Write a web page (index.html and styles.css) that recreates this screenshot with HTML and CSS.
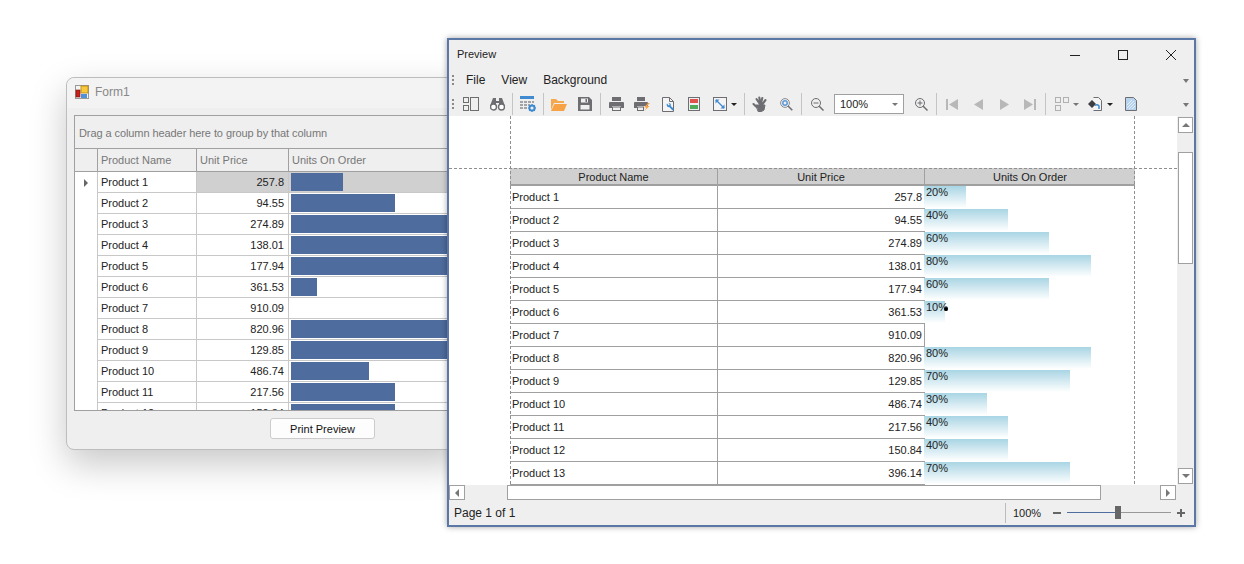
FILE: index.html
```html
<!DOCTYPE html>
<html lang="en">
<head>
<meta charset="utf-8">
<title>Preview</title>
<link rel="stylesheet" href="styles.css">
</head>
<body>
<section class="form">
  <header class="form-title">
    <svg class="form-icon" width="14" height="14" viewBox="0 0 14 14"><rect x=".5" y=".5" width="13" height="13" fill="#f4f4f4" stroke="#999"/><rect x="6" y="1" width="7" height="7" fill="#f8c93a" stroke="#b8860b" stroke-width=".8"/><rect x="1" y="5" width="4" height="7" fill="#c8201a" stroke="#7a100c" stroke-width=".6"/><rect x="6" y="9" width="6" height="4" fill="#4f8fdc"/></svg>
    <span>Form1</span>
  </header>
  <div class="grid">
    <div class="group-panel">Drag a column header here to group by that column</div>
    <div class="grid-head"><div></div><div>Product Name</div><div>Unit Price</div><div>Units On Order</div></div>
    <div class="grid-body">
      <div class="grid-row sel"><div class="ind"><i class="tri"></i></div><div class="name">Product 1</div><div class="price">257.8</div><div class="units"><b style="width:52px"></b></div></div>
      <div class="grid-row"><div class="ind"></div><div class="name">Product 2</div><div class="price">94.55</div><div class="units"><b style="width:104px"></b></div></div>
      <div class="grid-row"><div class="ind"></div><div class="name">Product 3</div><div class="price">274.89</div><div class="units"><b style="width:156px"></b></div></div>
      <div class="grid-row"><div class="ind"></div><div class="name">Product 4</div><div class="price">138.01</div><div class="units"><b style="width:208px"></b></div></div>
      <div class="grid-row"><div class="ind"></div><div class="name">Product 5</div><div class="price">177.94</div><div class="units"><b style="width:156px"></b></div></div>
      <div class="grid-row"><div class="ind"></div><div class="name">Product 6</div><div class="price">361.53</div><div class="units"><b style="width:26px"></b></div></div>
      <div class="grid-row"><div class="ind"></div><div class="name">Product 7</div><div class="price">910.09</div><div class="units"></div></div>
      <div class="grid-row"><div class="ind"></div><div class="name">Product 8</div><div class="price">820.96</div><div class="units"><b style="width:208px"></b></div></div>
      <div class="grid-row"><div class="ind"></div><div class="name">Product 9</div><div class="price">129.85</div><div class="units"><b style="width:182px"></b></div></div>
      <div class="grid-row"><div class="ind"></div><div class="name">Product 10</div><div class="price">486.74</div><div class="units"><b style="width:78px"></b></div></div>
      <div class="grid-row"><div class="ind"></div><div class="name">Product 11</div><div class="price">217.56</div><div class="units"><b style="width:104px"></b></div></div>
      <div class="grid-row"><div class="ind"></div><div class="name">Product 12</div><div class="price">150.84</div><div class="units"><b style="width:104px"></b></div></div>
    </div>
  </div>
  <div class="form-foot"><button class="print-btn" type="button">Print Preview</button></div>
</section>

<section class="preview">
  <header class="pv-title">
    <span>Preview</span>
    <div class="win-btns">
      <span class="win-btn"><svg width="12" height="12" viewBox="0 0 12 12"><path d="M1 6.500h10" stroke="#222" fill="none"/></svg></span>
      <span class="win-btn"><svg width="12" height="12" viewBox="0 0 12 12"><rect x="1.500" y="1.500" width="9" height="9" stroke="#222" fill="none"/></svg></span>
      <span class="win-btn"><svg width="12" height="12" viewBox="0 0 12 12"><path d="M1 1l10 10M11 1L1 11" stroke="#222" fill="none"/></svg></span>
    </div>
  </header>
  <nav class="menubar">
    <i class="grip"></i>
    <span class="menu-item">File</span><span class="menu-item">View</span><span class="menu-item">Background</span>
    <i class="overflow"></i>
  </nav>
  <div class="toolbar">
    <i class="grip"></i>
    <span class="tb"><svg width="16" height="14" viewBox="0 0 16 14" fill="none" stroke="#6d6d72"><rect x=".5" y=".5" width="5" height="5"/><rect x=".5" y="8.500" width="5" height="5"/><rect x="7.500" y=".5" width="8" height="13"/></svg></span>
    <span class="tb"><svg width="15" height="13" viewBox="0 0 15 13"><path d="M3 0h3v3h3V0h3l3 8H9V5H6v3H0z" fill="#6d6d72"/><circle cx="3.500" cy="9" r="3" fill="#fff" stroke="#6d6d72" stroke-width="1.400"/><circle cx="11.500" cy="9" r="3" fill="#fff" stroke="#6d6d72" stroke-width="1.400"/></svg></span>
    <i class="sep"></i>
    <span class="tb"><svg width="16" height="16" viewBox="0 0 16 16"><rect width="14" height="3" fill="#3f8ad0"/><path d="M0 5h3v2H0zM4 5h3v2H4zM8 5h3v2H8zM12 5h2v2h-2zM0 8h3v2H0zM4 8h3v2H4zM8 8h2v2H8zM0 11h3v2H0zM4 11h3v2H4z" fill="#a3a3a6"/><circle cx="12" cy="12" r="2.600" fill="none" stroke="#3f8ad0" stroke-width="2"/><path d="M12 8v1.500M12 14.500V16M8 12h1.500M14.500 12H16M9.200 9.200l1 1M13.800 13.800l1 1M14.800 9.200l-1 1M10.200 13.800l-1 1" stroke="#3f8ad0" stroke-width="1.200"/></svg></span>
    <i class="sep"></i>
    <span class="tb"><svg width="16" height="13" viewBox="0 0 16 13"><path d="M0 1h5l2 2h6v2H3L0 12z" fill="#f5a94e"/><path d="M3.500 6H16l-3 7H0z" fill="#f7a345"/></svg></span>
    <span class="tb"><svg width="14" height="14" viewBox="0 0 14 14"><path d="M0 0h11l3 3v11H0z" fill="#6d6d72"/><rect x="3" y="1.500" width="7" height="4" fill="#efefef"/><rect x="7.500" y="2" width="1.500" height="3" fill="#6d6d72"/><rect x="2.500" y="8" width="9" height="4.500" fill="#efefef"/></svg></span>
    <i class="sep"></i>
    <span class="tb"><svg width="15" height="14" viewBox="0 0 15 14"><path d="M3 0h9v4H3z" fill="#6d6d72"/><path d="M1 5h13a1 1 0 0 1 1 1v5h-3V9H3v2H0V6a1 1 0 0 1 1-1z" fill="#6d6d72"/><path d="M3 9.500h9V14H3z" fill="#6d6d72"/><path d="M4 10.500h7V13H4z" fill="#efefef"/></svg></span>
    <span class="tb"><svg width="16" height="14" viewBox="0 0 16 14"><path d="M3 0h8v4H3z" fill="#6d6d72"/><path d="M1 5h12a1 1 0 0 1 1 1v3H3v2H0V6a1 1 0 0 1 1-1z" fill="#6d6d72"/><path d="M3 9.500h7V14H3z" fill="#6d6d72"/><path d="M4 10.500h5V13H4z" fill="#efefef"/><path d="M14 6l-4 4.500h2.500L10.500 14l5-5h-2.500L16 6z" fill="#f7a345"/></svg></span>
    <span class="tb"><svg width="13" height="15" viewBox="0 0 13 15"><path d="M.5.500h7l4 4v10H.5z" fill="#f4f4f4" stroke="#6d6d72"/><path d="M7.500.5v4h4" fill="none" stroke="#6d6d72"/><path d="M5 6.500a2.500 2.500 0 0 0 2.500 3.800l3 3.200 1.500-1.500-3.200-3A2.500 2.500 0 0 0 6.500 6l1.200 1.500-1 1z" fill="#3f8ad0"/></svg></span>
    <span class="tb"><svg width="12" height="14" viewBox="0 0 12 14"><rect x=".5" y=".5" width="11" height="13" fill="#efefef" stroke="#6d6d72"/><rect x="2" y="2" width="8" height="4" fill="#e0504c"/><rect x="2" y="8" width="8" height="4" fill="#4ea95a"/></svg></span>
    <span class="tb tb-scale"><svg width="14" height="14" viewBox="0 0 14 14"><rect x=".5" y=".5" width="13" height="13" fill="#f4f4f4" stroke="#6d6d72"/><path d="M3 3l8 8" stroke="#3f8ad0" stroke-width="1.300"/><path d="M2.500 2.500h4l-4 4zM11.500 11.500h-4l4-4z" fill="#3f8ad0"/></svg><i class="drop"></i></span>
    <i class="sep"></i>
    <span class="tb"><svg width="16" height="16" viewBox="0 0 16 16" fill="#6d6d72" stroke="#6d6d72" stroke-linecap="round"><path d="M8.500 9L4.500 3M8.500 9L7.300 1.500M8.500 9l1.800-7M9 10l4.500-6M4 10.500L1.500 8" stroke-width="2.100" fill="none"/><path d="M4 9h9l-1 5-2.500 1.500H6.500z" stroke-width="1"/></svg></span>
    <span class="tb"><svg width="13" height="13" viewBox="0 0 13 13"><circle cx="5" cy="5" r="4.400" fill="none" stroke="#8a8a8e"/><circle cx="5" cy="5" r="2.200" fill="none" stroke="#5b9bd8" stroke-width="1.500"/><path d="M8 8l4.300 4.300" stroke="#6d6d72" stroke-width="1.500"/></svg></span>
    <i class="sep"></i>
    <span class="tb"><svg width="13" height="13" viewBox="0 0 13 13" fill="none" stroke="#6d6d72"><circle cx="5" cy="5" r="4.500"/><path d="M2.500 5h5"/><path d="M8 8l4.500 4.500" stroke-width="1.500"/></svg></span>
    <div class="zoom-combo"><span>100%</span><i class="drop soft"></i></div>
    <span class="tb"><svg width="13" height="13" viewBox="0 0 13 13" fill="none" stroke="#6d6d72"><circle cx="5" cy="5" r="4.500"/><path d="M2.500 5h5M5 2.500v5"/><path d="M8 8l4.500 4.500" stroke-width="1.500"/></svg></span>
    <i class="sep"></i>
    <span class="tb"><svg width="12" height="11" viewBox="0 0 12 11" fill="#b8b8b8"><rect width="2" height="11"/><path d="M12 0v11L3 5.500z"/></svg></span>
    <span class="tb"><svg width="9" height="11" viewBox="0 0 9 11" fill="#b8b8b8"><path d="M9 0v11L0 5.500z"/></svg></span>
    <span class="tb"><svg width="9" height="11" viewBox="0 0 9 11" fill="#b8b8b8"><path d="M0 0v11l9-5.500z"/></svg></span>
    <span class="tb"><svg width="12" height="11" viewBox="0 0 12 11" fill="#b8b8b8"><path d="M0 0v11l9-5.500z"/><rect x="10" width="2" height="11"/></svg></span>
    <i class="sep"></i>
    <span class="tb tb-multi"><svg width="14" height="14" viewBox="0 0 14 14" fill="none" stroke="#b0b0b0"><rect x=".5" y=".5" width="5" height="5"/><rect x="8.500" y=".5" width="5" height="5"/><rect x=".5" y="8.500" width="5" height="5"/></svg><i class="drop soft"></i></span>
    <span class="tb tb-export"><svg width="14" height="14" viewBox="0 0 14 14"><path d="M5.500.5h5l3 3v10h-8" fill="#f4f4f4" stroke="#6d6d72"/><path d="M4 3l4 4-4 4-4-4z" fill="#3d3d42"/><path d="M7 8.500a3 3 0 0 1 4 .5v3" fill="none" stroke="#3f8ad0" stroke-width="1.500"/></svg><i class="drop"></i></span>
    <span class="tb"><svg width="12" height="14" viewBox="0 0 12 14"><path d="M.5.500h8l3 3v10H.5z" fill="#b8d3ee" stroke="#6d6d72"/><path d="M2 11l7-7M2 8l5-5M4 12l6-6M7 12l3-3" stroke="#f0f6fc" stroke-width=".8"/></svg></span>
    <i class="overflow"></i>
  </div>

  <div class="pv-main">
    <div class="viewport">
      <div class="report">
        <div class="rp-head"><div>Product Name</div><div>Unit Price</div><div>Units On Order</div></div>
        <div class="rp-row"><div class="rp-name">Product 1</div><div class="rp-price">257.8</div><div class="rp-units"><b style="width:42px">20%</b></div></div>
        <div class="rp-row"><div class="rp-name">Product 2</div><div class="rp-price">94.55</div><div class="rp-units"><b style="width:84px">40%</b></div></div>
        <div class="rp-row"><div class="rp-name">Product 3</div><div class="rp-price">274.89</div><div class="rp-units"><b style="width:125px">60%</b></div></div>
        <div class="rp-row"><div class="rp-name">Product 4</div><div class="rp-price">138.01</div><div class="rp-units"><b style="width:167px">80%</b></div></div>
        <div class="rp-row"><div class="rp-name">Product 5</div><div class="rp-price">177.94</div><div class="rp-units"><b style="width:125px">60%</b></div></div>
        <div class="rp-row"><div class="rp-name">Product 6</div><div class="rp-price">361.53</div><div class="rp-units"><b style="width:21px">10%</b><i class="dot"></i></div></div>
        <div class="rp-row"><div class="rp-name">Product 7</div><div class="rp-price">910.09</div><div class="rp-units"></div></div>
        <div class="rp-row"><div class="rp-name">Product 8</div><div class="rp-price">820.96</div><div class="rp-units"><b style="width:167px">80%</b></div></div>
        <div class="rp-row"><div class="rp-name">Product 9</div><div class="rp-price">129.85</div><div class="rp-units"><b style="width:146px">70%</b></div></div>
        <div class="rp-row"><div class="rp-name">Product 10</div><div class="rp-price">486.74</div><div class="rp-units"><b style="width:63px">30%</b></div></div>
        <div class="rp-row"><div class="rp-name">Product 11</div><div class="rp-price">217.56</div><div class="rp-units"><b style="width:84px">40%</b></div></div>
        <div class="rp-row"><div class="rp-name">Product 12</div><div class="rp-price">150.84</div><div class="rp-units"><b style="width:84px">40%</b></div></div>
        <div class="rp-row"><div class="rp-name">Product 13</div><div class="rp-price">396.14</div><div class="rp-units"><b style="width:146px">70%</b></div></div>
      </div>
      <i class="guide guide-l"></i><i class="guide guide-r"></i><i class="guide guide-t"></i>
    </div>
    <div class="vscroll">
      <span class="sb-btn"><i class="arr up"></i></span>
      <span class="vthumb"></span>
      <span class="sb-btn sb-end"><i class="arr down"></i></span>
    </div>
    <div class="hscroll">
      <span class="sb-btn"><i class="arr left"></i></span>
      <span class="hthumb"></span>
      <span class="sb-btn"><i class="arr right"></i></span>
    </div>
  </div>

  <footer class="status">
    <span class="page-info">Page 1 of 1</span>
    <div class="zoom-box">
      <span class="zoom-pct">100%</span>
      <span class="zoom-sign minus"></span>
      <span class="slider"><i class="s-fill"></i><i class="s-handle"></i><i class="s-rest"></i></span>
      <span class="zoom-sign plus"></span>
    </div>
  </footer>
</section>
</body>
</html>
```
FILE: styles.css
```css
* { box-sizing: border-box; }
html, body { margin: 0; padding: 0; }
body {
  position: relative;
  width: 1244px;
  height: 564px;
  overflow: hidden;
  background: #fff;
  font-family: "Liberation Sans", Arial, sans-serif;
  font-size: 11px;
  color: #222;
}
i, b { display: block; font-style: normal; font-weight: normal; }

/* Form1 window */
.form {
  position: absolute;
  left: 66px;
  top: 77px;
  width: 400px;
  height: 373px;
  display: flex;
  flex-direction: column;
  background: #efefef;
  border: 1px solid #bdbdbd;
  border-radius: 8px;
  box-shadow: 0 14px 36px rgba(0, 0, 0, .22);
}
.form-title {
  height: 30px;
  display: flex;
  align-items: center;
  gap: 6px;
  padding: 0 0 2px 8px;
  background: #f3f3f3;
  border-radius: 8px 8px 0 0;
  color: #888;
  font-size: 12px;
}
.grid {
  margin: 7px 0 0 7px;
  height: 296px;
  border: 1px solid #a0a0a0;
  background: #fff;
  display: flex;
  flex-direction: column;
  overflow: hidden;
}
.group-panel {
  height: 33px;
  flex: none;
  padding: 1px 0 0 4px;
  display: flex;
  align-items: center;
  background: #efefef;
  color: #777;
  letter-spacing: -.08px;
  border-bottom: 1px solid #a0a0a0;
}
.grid-head, .grid-row {
  display: grid;
  grid-template-columns: 23px 99px 92px 1fr;
  flex: none;
}
.grid-head {
  height: 23px;
  background: #efefef;
  color: #777;
  border-bottom: 1px solid #a0a0a0;
}
.grid-head div {
  display: flex;
  align-items: center;
  padding-left: 3px;
  border-right: 1px solid #a0a0a0;
}
.grid-head div:last-child { border-right: 0; }
.grid-body { flex: 1; overflow: hidden; }
.grid-row { height: 21px; }
.grid-row > div {
  border-right: 1px solid #c8c8c8;
  border-bottom: 1px solid #c8c8c8;
}
.grid-row .ind { border-bottom: 0; display: flex; align-items: center; justify-content: center; }
.grid-row .units { border-right: 0; padding: 1px 0 0 2px; }
.tri {
  width: 0; height: 0;
  border-left: 4px solid #666;
  border-top: 4px solid transparent;
  border-bottom: 4px solid transparent;
}
.name, .price { display: flex; align-items: center; color: #222; }
.name { padding-left: 3px; }
.price { justify-content: flex-end; padding-right: 4px; }
.units b { height: 18px; background: #4e6c9d; }
.sel .price, .sel .units { background: #d0d0d0; }
.form-foot { flex: 1; display: flex; justify-content: flex-start; padding: 7px 0 0 203px; }
.print-btn {
  width: 105px;
  height: 21px;
  padding: 0;
  background: #fdfdfd;
  border: 1px solid #ccc;
  border-radius: 3px;
  font: inherit;
  color: #111;
}

/* Preview window */
.preview {
  position: absolute;
  left: 447px;
  top: 38px;
  width: 749px;
  height: 489px;
  display: flex;
  flex-direction: column;
  background: #efefef;
  border: 2px solid #5a77a6;
  box-shadow: 0 0 6px rgba(0, 0, 0, .35);
}
.pv-title {
  height: 28px;
  flex: none;
  display: flex;
  align-items: center;
  justify-content: space-between;
  padding-left: 8px;
  color: #222;
}
.win-btns { display: flex; margin: 1px -1px 0 0; }
.win-btn { width: 48px; display: flex; justify-content: center; }
.menubar, .toolbar {
  display: flex;
  align-items: center;
  flex: none;
  padding-left: 3px;
  padding-right: 5px;
}
.menubar { height: 24px; font-size: 12px; color: #222; }
.toolbar { height: 24px; }
.grip {
  width: 2px;
  height: 10px;
  margin-right: 4px;
  background: repeating-linear-gradient(#8a8a8a 0 2px, transparent 2px 4px);
  flex: none;
}
.menu-item { margin-left: 8px; margin-right: 8px; }
.overflow {
  margin-left: auto;
  width: 0; height: 0;
  border-top: 4px solid #777;
  border-left: 3px solid transparent;
  border-right: 3px solid transparent;
  margin-top: 2px;
}
.tb {
  width: 26px;
  height: 24px;
  flex: none;
  display: flex;
  align-items: center;
  justify-content: center;
}
.tb-scale { width: 35px; justify-content: flex-start; padding-left: 6px; gap: 4px; }
.tb-multi { width: 34px; justify-content: flex-start; padding-left: 7px; gap: 4px; }
.tb-export { width: 36px; justify-content: flex-start; padding-left: 6px; gap: 5px; }
.sep { width: 5px; height: 22px; flex: none; background: linear-gradient(#c4c4c4, #c4c4c4) center / 1px 100% no-repeat; }
.drop {
  width: 0; height: 0;
  border-top: 3px solid #222;
  border-left: 3px solid transparent;
  border-right: 3px solid transparent;
}
.drop.soft { border-top-color: #777; }
.zoom-combo {
  width: 70px;
  height: 20px;
  flex: none;
  margin: 0 4px;
  display: flex;
  align-items: center;
  justify-content: space-between;
  padding: 0 5px;
  background: #fff;
  border: 1px solid #a0a0a0;
  color: #222;
}

.pv-main {
  flex: 1;
  display: grid;
  grid-template-columns: 728px 1fr;
  grid-template-rows: 369px 1fr;
  min-height: 0;
}
.viewport {
  position: relative;
  background: #fff;
  overflow: hidden;
  padding: 52px 0 0 61px;
}
.report { width: 625px; }
.rp-head, .rp-row { display: grid; grid-template-columns: 208px 207px 210px; }
.rp-head { height: 18px; background: #d0d0d0; border-bottom: 2px solid #a0a0a0; color: #222; }
.rp-head div { display: flex; align-items: center; justify-content: center; padding-top: 1px; border-right: 1px solid #a0a0a0; }
.rp-head div:last-child { border-right: 0; }
.rp-row { height: 23px; color: #222; }
.rp-name, .rp-price {
  display: flex;
  align-items: center;
  border-right: 1px solid #a0a0a0;
  border-bottom: 1px solid #a0a0a0;
}
.rp-name { padding-left: 2px; }
.rp-price { justify-content: flex-end; padding-right: 2px; }
.rp-units { position: relative; margin-left: -1px; }
.rp-units b {
  height: 22px;
  padding-left: 2px;
  line-height: 13px;
  white-space: nowrap;
  background: linear-gradient(#a9d5e4, #ffffff);
}
.dot { position: absolute; left: 20px; top: 6px; width: 4px; height: 4px; border-radius: 50%; background: #000; }
.guide { position: absolute; }
.guide-l, .guide-r { top: 0; bottom: 0; width: 1px; background: repeating-linear-gradient(#8f8f8f 0 3px, transparent 3px 5px); }
.guide-l { left: 61px; }
.guide-r { left: 685px; }
.guide-t { left: 0; right: 0; top: 52px; height: 1px; background: repeating-linear-gradient(90deg, #8f8f8f 0 3px, transparent 3px 5px); }
.vscroll {
  display: flex;
  flex-direction: column;
  padding: 1px 0 1px 1px;
}
.sb-btn {
  width: 16px;
  height: 16px;
  flex: none;
  display: flex;
  align-items: center;
  justify-content: center;
  background: #fff;
  border: 1px solid #a0a0a0;
}
.vscroll .sb-btn { width: 15px; }
.vthumb { width: 15px; height: 112px; margin-top: 19px; background: #fff; border: 1px solid #a0a0a0; }
.sb-end { margin-top: auto; }
.arr { width: 0; height: 0; }
.arr.up { border-bottom: 4px solid #777; border-left: 4px solid transparent; border-right: 4px solid transparent; }
.arr.down { border-top: 4px solid #777; border-left: 4px solid transparent; border-right: 4px solid transparent; }
.arr.left { border-right: 4px solid #777; border-top: 4px solid transparent; border-bottom: 4px solid transparent; }
.arr.right { border-left: 4px solid #777; border-top: 4px solid transparent; border-bottom: 4px solid transparent; }
.hscroll { display: flex; align-items: flex-start; grid-column: 1; }
.hthumb { width: 594px; height: 15px; margin: 0 59px 0 42px; background: #fff; border: 1px solid #a0a0a0; }
.hscroll .sb-btn { height: 15px; }
.status {
  height: 25px;
  flex: none;
  display: flex;
  align-items: center;
  justify-content: space-between;
  padding-left: 5px;
  color: #222;
  font-size: 12px;
}
.zoom-box { display: flex; align-items: center; height: 20px; width: 189px; border-left: 1px solid #bbb; padding-left: 7px; }
.zoom-pct { width: 40px; font-size: 11px; }
.zoom-sign { width: 8px; height: 2px; background: #666; position: relative; flex: none; }
.plus::after { content: ""; position: absolute; left: 3px; top: -3px; width: 2px; height: 8px; background: #666; }
.slider { display: flex; align-items: center; width: 104px; margin: 0 6px; }
.s-fill { width: 48px; height: 1px; background: #4f6d9e; }
.s-handle { width: 6px; height: 13px; background: #666; }
.s-rest { flex: 1; height: 1px; background: #999; }
```
